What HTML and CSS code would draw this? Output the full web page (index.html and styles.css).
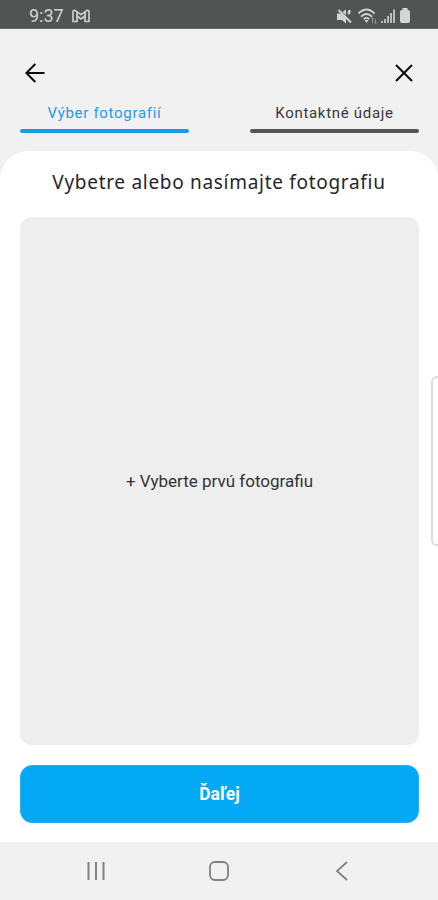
FILE: index.html
```html
<!DOCTYPE html>
<html lang="sk">
<head>
<meta charset="utf-8">
<title>Výber fotografií</title>
<link rel="stylesheet" href="styles.css">
</head>
<body>
<div class="screen">
  <div class="status">
    <span class="time">9:37</span>
    <svg class="mail" width="18" height="14" viewBox="0 0 18 14" fill="none" stroke="#cdcfce" stroke-width="1.7" stroke-linejoin="round"><path d="M1 12.5V3Q1 1 3 1.4L9 5.6L15 1.4Q17 1 17 3V12.5H13V7L9 10L5 7V12.5Z"/><path d="M5 3V7M13 3V7"/></svg>
    <svg class="tray" width="74" height="18" viewBox="0 0 74 18" fill="#d4d6d5">
      <path d="M0 5.5h4l5 5v5L5 12H0zM5.5 4L9 1.5V7zM10.5 5l1-3h2v3l-2 2z"/><path d="M1.5 2L14 14.5" stroke="#d4d6d5" stroke-width="2"/>
      <g fill="none" stroke="#d4d6d5" stroke-width="1.8"><path d="M21.5 5.5Q29.5-2.5 37.5 5.5M24 8.7Q29.5 3.3 35 8.7M26.7 11.2Q29.5 8.5 32.3 11.2"/></g><path d="M27.5 12h4l-2 3z"/><path d="M34 11l1.5-2L37 11h-1v4h-1v-4zM38 11h1v3h1l-1.5 2L37 14h1z" opacity=".5"/>
      <path d="M44 13h2v2h-2zM47 11h2v4h-2zM50 8h2v7h-2zM53 5h2v10h-2zM56 1.5h2V15h-2z" opacity=".8"/>
      <path d="M65.5 0h5v2h.5q2 0 2 2v9q0 2-2 2h-6q-2 0-2-2V4q0-2 2-2h.5z"/>
    </svg>
  </div>
  <header class="top">
    <svg width="20" height="20" viewBox="0 0 20 20" fill="none" stroke="#0b0b0b" stroke-width="2"><path d="M19.5 10H1.5M10.3 1L1.3 10l9 9"/></svg>
    <svg class="close" width="18" height="18" viewBox="0 0 18 18" fill="none" stroke="#0b0b0b" stroke-width="2"><path d="M1 1l16 16M17 1L1 17"/></svg>
  </header>
  <nav class="tabs">
    <div class="tab active"><span>Výber fotografií</span></div>
    <div class="tab"><span>Kontaktné údaje</span></div>
  </nav>
  <main class="sheet">
    <h1>Vybetre alebo nasímajte fotografiu</h1>
    <div class="picker"><span>+ Vyberte prvú fotografiu</span></div>
    <button class="next"><span>Ďaľej</span></button>
    <div class="edge"></div>
  </main>
  <footer class="nav">
    <svg width="20" height="20" viewBox="0 0 20 20" stroke="#808080" stroke-width="2"><path d="M2.5 1v18M10 1v18M17.500 1v18"/></svg>
    <svg width="22" height="22" viewBox="0 0 22 22" fill="none" stroke="#808080" stroke-width="1.8"><rect x="2" y="2" width="18" height="18" rx="5"/></svg>
    <svg width="14" height="20" viewBox="0 0 14 20" fill="none" stroke="#808080" stroke-width="1.8"><path d="M12 1L2 10l10 9"/></svg>
  </footer>
</div>
</body>
</html>
```
FILE: styles.css
```css
* { box-sizing: border-box; }
body { margin: 0; font-family: Roboto, sans-serif; }
.screen { width: 438px; height: 900px; background: #f1f1f1; display: flex; flex-direction: column; overflow: hidden; }
.status { height: 29px; background: #505453; display: flex; align-items: flex-start; padding: 0 27px 0 29px; border-bottom: 1px solid #686b6a; }
.time { width: 43px; padding-top: 5px; font-size: 18px; line-height: 22px; color: #d2d4d3; }
.mail { margin-top: 9px; }
.tray { margin: 8px 0 0 auto; }
.top { height: 69px; padding: 34px 25px 0; display: flex; justify-content: space-between; }
.close { margin-top: 1px; }
.tabs { height: 54px; display: flex; justify-content: space-between; padding: 0 19px 0 20px; }
.tab { width: 169px; padding-top: 5px; text-align: center; font-size: 15px; line-height: 20px; letter-spacing: .7px; color: #38393e; white-space: nowrap; display: flex; flex-direction: column; }
.tab::after { content: ""; height: 4px; flex: none; margin-top: 5.5px; border-radius: 2px; background: #555; }
.active { color: #259ae9; }
.active::after { background: #179cec; }
.sheet { height: 691px; background: #fff; border-radius: 28px 28px 0 0; padding: 0 20px; position: relative; margin-top: -1px; }
h1 { margin: 0; height: 66px; padding-top: 17px; font: 400 19px/28px "Noto Sans", sans-serif; letter-spacing: .7px; color: #26262e; text-align: center; white-space: nowrap; }
.picker { width: 399px; height: 528px; border-radius: 12px; background: #eee; display: flex; align-items: center; justify-content: center; font-size: 17px; color: #333; }
.next { display: block; width: 399px; height: 58px; margin: 20px 0 0; padding: 0; border: 1px solid #28aef4; border-radius: 12px; background: #04a9f5; color: #fff; font: 700 17.5px Roboto, sans-serif; }
.edge { position: absolute; left: 431px; top: 225px; width: 12px; height: 170px; border: 2px solid #dedede; border-radius: 7px; background: #fff; }
.nav { height: 58px; display: grid; grid-template-columns: 123px 123px 123px; justify-content: center; align-items: center; justify-items: center; }
```
